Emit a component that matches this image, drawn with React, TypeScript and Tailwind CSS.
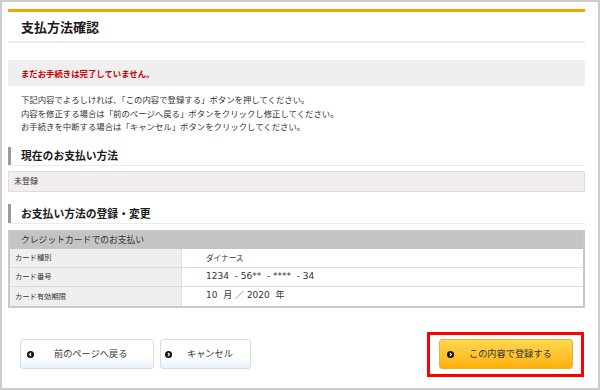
import React from "react";

function Dot({ dir }: { dir: "left" | "right" }) {
  return (
    <svg width="7" height="7" viewBox="0 0 10 10" className="shrink-0">
      <circle cx="5" cy="5" r="5" fill="#111" />
      {dir === "left" ? (
        <path d="M6 2.6 L3.6 5 L6 7.4" stroke="#fff" strokeWidth="1.6" fill="none" />
      ) : (
        <path d="M4 2.6 L6.4 5 L4 7.4" stroke="#fff" strokeWidth="1.6" fill="none" />
      )}
    </svg>
  );
}

function Heading({ children, h }: { children: React.ReactNode; h: string }) {
  return (
    <div className={`flex items-stretch border-b border-[#ececec] ${h}`}>
      <div className="w-[3px] bg-[#9a9a9a]" />
      <div className="flex items-center pl-[10px] text-[10.8px] font-bold text-[#1a1a1a]">{children}</div>
    </div>
  );
}

export default function App() {
  const rows: [string, React.ReactNode][] = [
    ["カード種別", <span className="text-[7.6px]">ダイナース</span>],
    [
      "カード番号",
      <span className="text-[9px] whitespace-pre" style={{ fontFamily: "'DejaVu Sans', 'Noto Sans CJK JP', sans-serif" }}>
        {"1234  - 56**  - ****  - 34"}
      </span>,
    ],
    [
      "カード有効期限",
      <span className="text-[9px] whitespace-pre" style={{ fontFamily: "'DejaVu Sans', 'Noto Sans CJK JP', sans-serif" }}>
        {"10  月 ／ 2020  年"}
      </span>,
    ],
  ];
  return (
    <div
      className="w-[600px] h-[390px] border-2 border-[#cdcdcd] bg-white pl-[6px] pr-[13px] pt-[7px]"
      style={{ fontFamily: "'Noto Sans CJK JP', 'Noto Sans', sans-serif" }}
    >
      <div className="h-[3px] bg-[#f4a300]" />
      <div className="h-[29px] flex items-center pl-[13px] text-[13px] font-bold text-[#1a1a1a]">支払方法確認</div>
      <div className="h-[2px] bg-[#eeeeee]" />
      <div className="mt-[17px] h-[26px] bg-[#efefef] flex items-center pl-[13px] text-[8.4px] font-bold text-[#cc0000]">
        まだお手続きは完了していません。
      </div>
      <div className="mt-[7px] pl-[13px] text-[8.4px] leading-[13.5px] text-[#333]">
        <div>下記内容でよろしければ、「この内容で登録する」ボタンを押してください。</div>
        <div>内容を修正する場合は「前のページへ戻る」ボタンをクリックし修正してください。</div>
        <div>お手続きを中断する場合は「キャンセル」ボタンをクリックしてください。</div>
      </div>
      <div className="mt-[13px]">
        <Heading h="h-[19px]">現在のお支払い方法</Heading>
      </div>
      <div className="mt-[5px] h-[21px] border border-[#dedede] bg-[#f3eeee] flex items-center pl-[5px] text-[8px] text-[#333]">
        未登録
      </div>
      <div className="mt-[12px]">
        <Heading h="h-[20px]">お支払い方法の登録・変更</Heading>
      </div>
      <div className="mt-[6px] border-2 border-[#c9c9c9]">
        <div className="h-[17px] bg-[#c4c4c4] flex items-center pl-[11px] text-[8.8px] text-[#333]">
          クレジットカードでのお支払い
        </div>
        {rows.map(([label, value], i) => (
          <div key={label} className={`flex h-[19px] ${i < 2 ? "border-b border-[#dcdcdc]" : ""}`}>
            <div className="w-[172px] bg-[#efefef] border-r border-[#e2e2e2] flex items-center pl-[5px] text-[7.3px] text-[#333]">
              {label}
            </div>
            <div className="flex-1 bg-white flex items-center pl-[24px] text-[#333]">{value}</div>
          </div>
        ))}
      </div>
      <div className="mt-[24px] flex items-center justify-between pl-[12px] pr-[1px]">
        <div className="flex items-center gap-[6px]">
          <button className="w-[134px] h-[30px] rounded-[3px] border border-[#dcdcdc] bg-gradient-to-b from-white from-60% to-[#e9f1fb] flex items-center pl-[6px] text-[9.2px] text-[#333]">
            <Dot dir="left" />
            <span className="ml-[20px]">前のページへ戻る</span>
          </button>
          <button className="w-[91px] h-[30px] rounded-[3px] border border-[#dcdcdc] bg-gradient-to-b from-white from-60% to-[#e9f1fb] flex items-center pl-[4px] text-[9.2px] text-[#333]">
            <Dot dir="right" />
            <span className="ml-[15px]">キャンセル</span>
          </button>
        </div>
        <div className="w-[157px] h-[45px] border-[3px] border-[#ff0000] flex items-center pl-[9px]">
          <button className="w-[134px] h-[30px] rounded-[3px] border border-[#e2b441] bg-gradient-to-b from-[#ffd84c] to-[#ffb000] flex items-center pl-[7px] text-[9.2px] text-[#333]">
            <Dot dir="right" />
            <span className="ml-[15px]">この内容で登録する</span>
          </button>
        </div>
      </div>
    </div>
  );
}
